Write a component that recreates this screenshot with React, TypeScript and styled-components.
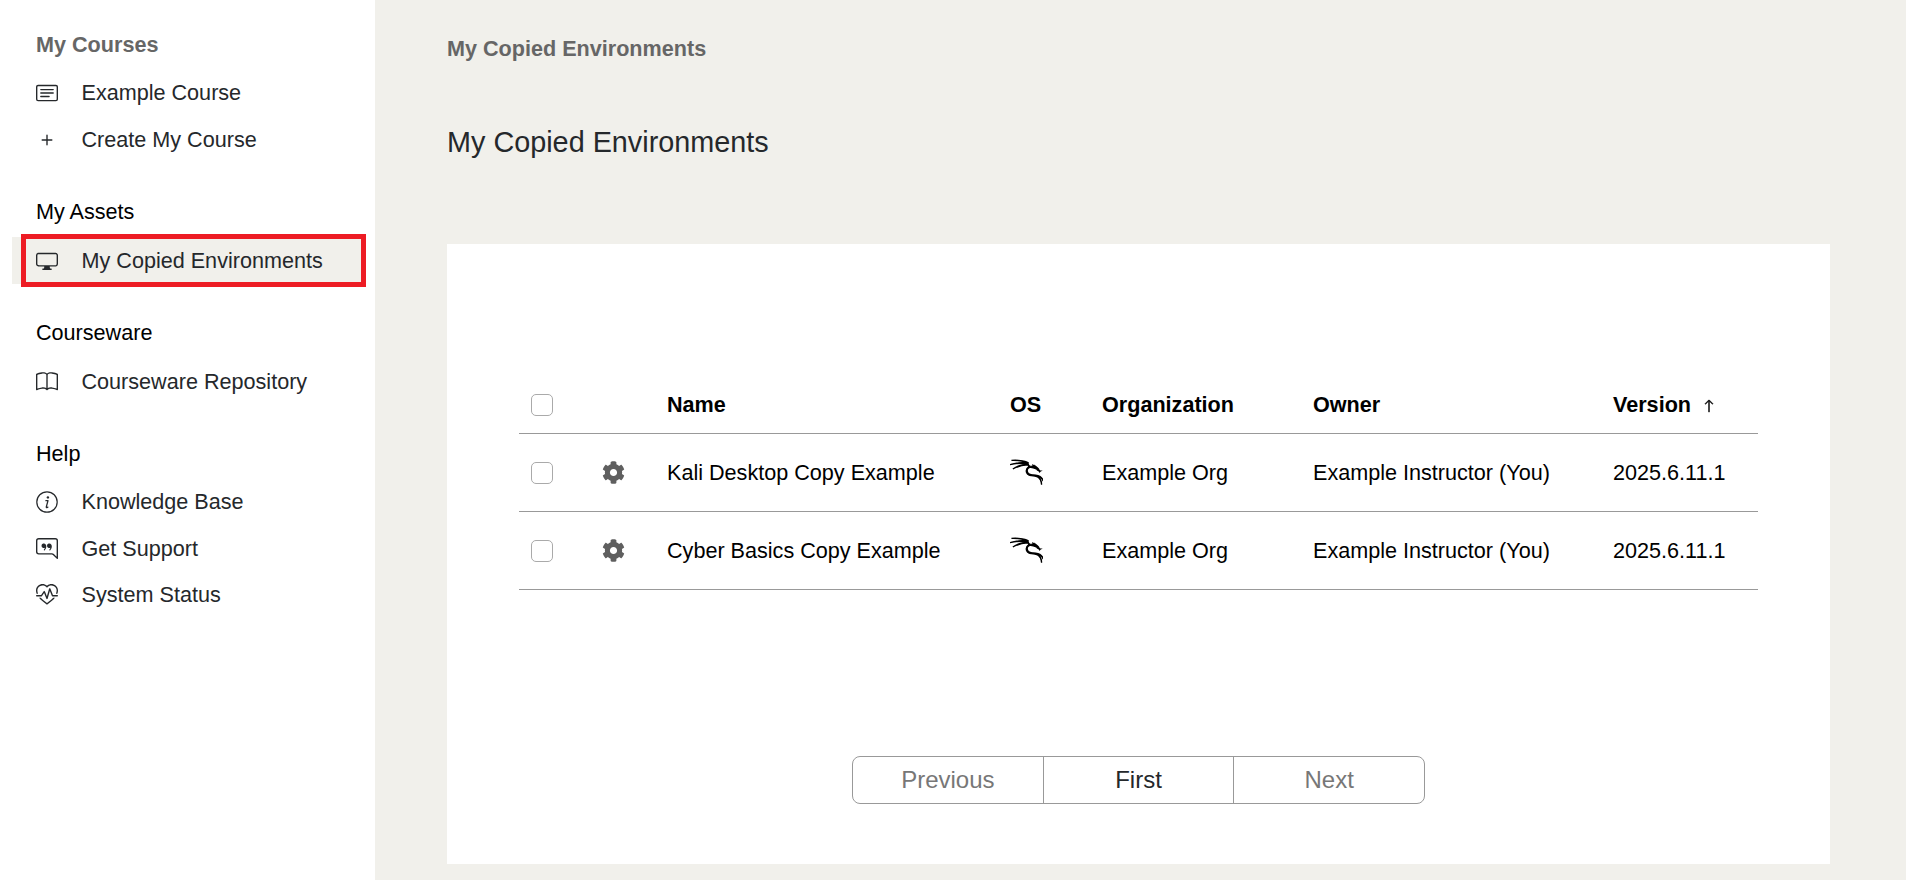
import React from 'react';
import styled, {createGlobalStyle} from 'styled-components';
import {BsArrowUp, BsBook, BsCardText, BsChatRightQuote, BsDisplay, BsHeartPulse, BsPlus} from 'react-icons/bs';
import {FaCog} from 'react-icons/fa';
import {SiKalilinux} from 'react-icons/si';

const GlobalStyle = createGlobalStyle`
  html, body {
    margin: 0;
    height: 100%;
    overflow: hidden;
    font-family: "Liberation Sans", Arial, sans-serif;
    background: #f1f0eb;
  }
`

const Page = styled.div`
  display: flex;
  height: 880px;
`

const Sidebar = styled.nav`
  width: 375px;
  flex-shrink: 0;
  box-sizing: border-box;
  padding: 32px 0 0 0;
  background: #fff;
  display: flex;
  flex-direction: column;
  gap: 37px;
`

const Section = styled.section`
  display: flex;
  flex-direction: column;
`

const SectionHead = styled.h3<{ $muted?: boolean }>`
  margin: ${p => (p.$muted ? '1px 0 12px 36px' : '0 0 13px 36px')};
  font-size: 21.6px;
  line-height: 24px;
  font-weight: ${p => (p.$muted ? 700 : 400)};
  color: ${p => (p.$muted ? '#666' : '#000')};
`

const NavRow = styled.a<{ $active?: boolean; $tight?: boolean }>`
  position: relative;
  display: flex;
  align-items: center;
  gap: 23.5px;
  height: ${p => (p.$tight ? '46.5px' : '47px')};
  width: 350px;
  margin-left: 12px;
  padding-left: 24px;
  box-sizing: border-box;
  font-size: 21.6px;
  color: #25282b;
  background: ${p => (p.$active ? '#f1f0eb' : 'transparent')};

  svg {
    width: 22px;
    height: 22px;
    flex-shrink: 0;
    color: #25282b;
  }
`

const Highlight = styled.span`
  position: absolute;
  left: 9px;
  right: -4px;
  top: -3px;
  bottom: -3px;
  border: 5px solid #ed1c24;
  pointer-events: none;
`

const Main = styled.main`
  flex: 1;
  min-width: 0;
  box-sizing: border-box;
  padding: 36px 76px 0 72px;
`

const Breadcrumb = styled.div`
  font-size: 21.6px;
  line-height: 24px;
  font-weight: 700;
  color: #666;
  padding-top: 1px;
  margin-bottom: -1px;
`

const Title = styled.h1`
  margin: 66px 0 86px;
  font-size: 28.8px;
  line-height: 32px;
  font-weight: 400;
  color: #25282b;
`

const Card = styled.div`
  height: 620px;
  box-sizing: border-box;
  padding: 132px 72px 0;
  background: #fff;
`

const Table = styled.table`
  width: 100%;
  table-layout: fixed;
  border-collapse: collapse;
  font-size: 21.6px;
  color: #000;
`

const HeadRow = styled.tr`
  height: 57px;
  border-bottom: 1px solid #999;
`

const BodyRow = styled.tr`
  height: 78px;
  border-bottom: 1px solid #999;
`

const HeadCell = styled.th`
  padding: 2px 0 0;
  text-align: left;
  font-weight: 700;
`

const Cell = styled.td`
  padding: 1px 0 0;
  vertical-align: middle;
  line-height: 0;

  & > span {
    line-height: 24px;
  }
`

const CheckCell = styled(Cell)`
  padding-left: 12px;
`

const HeadCheckCell = styled(HeadCell)`
  padding-left: 12px;
  line-height: 0;
`

const Check = styled.input.attrs({type: 'checkbox'})`
  appearance: none;
  display: block;
  width: 22px;
  height: 22px;
  margin: 0;
  border: 1px solid #aaa;
  border-radius: 5px;
  background: #fff;
  box-sizing: border-box;
`

const Gear = styled(FaCog)`
  display: block;
  width: 23px;
  height: 23px;
  color: #5f5f5f;
`

const KaliIcon = styled(SiKalilinux)`
  display: block;
  width: 33px;
  height: 33px;
  color: #000;
  stroke: currentColor;
  stroke-width: 0.9px;
`

const SortArrow = styled(BsArrowUp)`
  width: 14px;
  height: 14px;
  margin-left: 10.5px;
  vertical-align: -1px;
  stroke: currentColor;
  stroke-width: 0.6px;
`

const PagerWrap = styled.div`
  display: flex;
  justify-content: center;
  margin-top: 166px;
`

const Pager = styled.div`
  display: flex;
  width: 573px;
  height: 48px;
  box-sizing: border-box;
  border: 1px solid #999;
  border-radius: 8px;
`

const PageBtn = styled.button<{ $disabled?: boolean }>`
  flex: 1;
  padding: 0;
  border: none;
  border-right: 1px solid #999;
  background: transparent;
  font-family: inherit;
  font-size: 24px;
  color: ${p => (p.$disabled ? '#777' : '#25282b')};

  &:last-child {
    border-right: none;
  }
`

const InfoIcon = () => (
  <svg viewBox="0 0 22 22" fill="none" stroke="currentColor">
    <circle cx="11" cy="11" r="10.2" strokeWidth="1.2" />
    <circle cx="11.9" cy="6.4" r="1.2" fill="currentColor" stroke="none" />
    <path d="M9.4 9.6h2.6l-1.7 6.3c-.2.7.4.9 1 .6l1-.7" strokeWidth="1.3" strokeLinejoin="round" />
  </svg>
);

const rows = [
  {name: 'Kali Desktop Copy Example'},
  {name: 'Cyber Basics Copy Example'},
];

export default function App() {
  return (
    <Page>
      <GlobalStyle />
      <Sidebar>
        <Section>
          <SectionHead $muted>My Courses</SectionHead>
          <NavRow><BsCardText />Example Course</NavRow>
          <NavRow><BsPlus />Create My Course</NavRow>
        </Section>
        <Section>
          <SectionHead>My Assets</SectionHead>
          <NavRow $active><BsDisplay />My Copied Environments<Highlight /></NavRow>
        </Section>
        <Section>
          <SectionHead>Courseware</SectionHead>
          <NavRow><BsBook />Courseware Repository</NavRow>
        </Section>
        <Section>
          <SectionHead>Help</SectionHead>
          <NavRow $tight><InfoIcon />Knowledge Base</NavRow>
          <NavRow $tight><BsChatRightQuote />Get Support</NavRow>
          <NavRow $tight><BsHeartPulse />System Status</NavRow>
        </Section>
      </Sidebar>
      <Main>
        <Breadcrumb>My Copied Environments</Breadcrumb>
        <Title>My Copied Environments</Title>
        <Card>
          <Table>
            <colgroup>
              <col width={83} />
              <col width={65} />
              <col width={343} />
              <col width={92} />
              <col width={211} />
              <col width={300} />
              <col width={145} />
            </colgroup>
            <thead>
              <HeadRow>
                <HeadCheckCell><Check /></HeadCheckCell>
                <HeadCell />
                <HeadCell>Name</HeadCell>
                <HeadCell>OS</HeadCell>
                <HeadCell>Organization</HeadCell>
                <HeadCell>Owner</HeadCell>
                <HeadCell>Version<SortArrow /></HeadCell>
              </HeadRow>
            </thead>
            <tbody>
              {rows.map(row => (
                <BodyRow key={row.name}>
                  <CheckCell><Check /></CheckCell>
                  <Cell><Gear /></Cell>
                  <Cell><span>{row.name}</span></Cell>
                  <Cell><KaliIcon /></Cell>
                  <Cell><span>Example Org</span></Cell>
                  <Cell><span>Example Instructor (You)</span></Cell>
                  <Cell><span>2025.6.11.1</span></Cell>
                </BodyRow>
              ))}
            </tbody>
          </Table>
          <PagerWrap>
            <Pager>
              <PageBtn $disabled>Previous</PageBtn>
              <PageBtn>First</PageBtn>
              <PageBtn $disabled>Next</PageBtn>
            </Pager>
          </PagerWrap>
        </Card>
      </Main>
    </Page>
  );
}
